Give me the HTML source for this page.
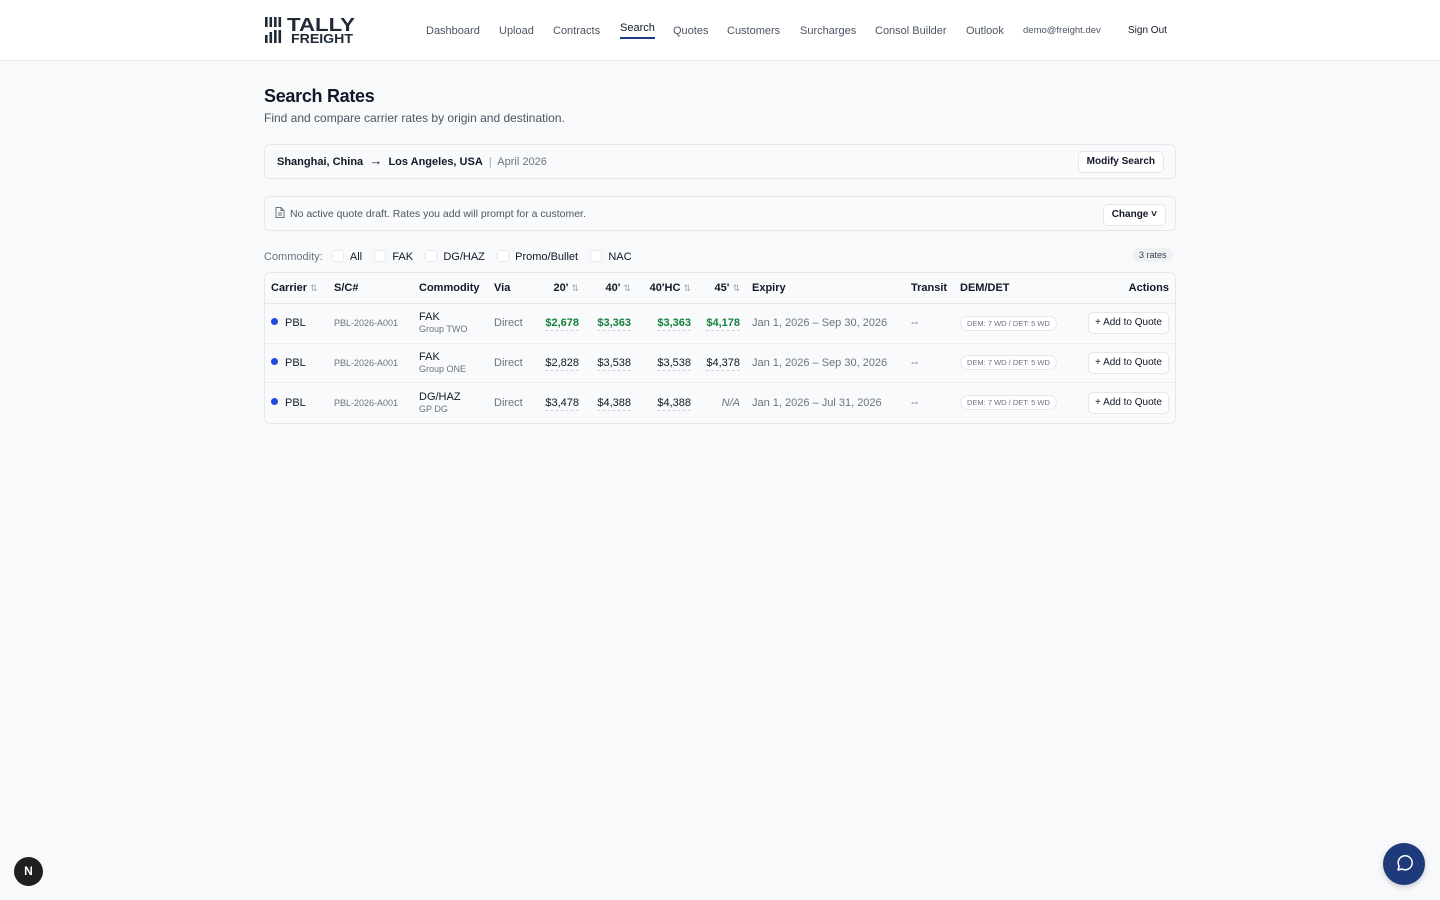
<!DOCTYPE html>
<html><head><meta charset="utf-8"><style>
*{box-sizing:border-box;margin:0;padding:0}
body{width:1440px;height:900px;background:#f8f9fb;font-family:"Liberation Sans",Arial,sans-serif;color:#111827;position:relative;overflow:hidden}
.hdr{height:61px;background:#fff;border-bottom:1px solid #e5e7eb;position:relative}
.logo{position:absolute;left:265px;top:15px}
.nav{position:absolute;top:25px;font-size:11px;color:#4b5563}
.nav span{position:absolute;white-space:nowrap}
.wrap{position:absolute;left:264px;width:912px}
h1{font-size:18px;font-weight:bold;letter-spacing:-.3px}
.sub{font-size:12px;color:#4b5563;margin-top:4px}
.card{position:absolute;left:264px;width:912px;border:1px solid #e5e7eb;border-radius:6px;background:#f9fafb}
.btn{position:absolute;background:#fff;border:1px solid #e5e7eb;border-radius:5px;font-size:10px;font-weight:600;color:#111827;padding:0 8px;line-height:20px}
.cb{display:inline-block;width:12px;height:12px;border:1px solid #e5e7eb;border-radius:3px;background:#fff;vertical-align:-2px;margin-right:6px}
table{position:absolute;left:264px;top:272px;width:912px;border:1px solid #e5e7eb;border-radius:6px;border-collapse:separate;border-spacing:0;table-layout:fixed;font-size:11px;background:#f9fafb}
td,th{padding:0 6px;white-space:nowrap}
th{height:31px;font-weight:600;text-align:left;color:#111827;border-bottom:1px solid #e5e7eb;font-size:11px}
td{height:39.5px;border-bottom:1px solid #eceef1}
tr:last-child td{border-bottom:none}
.r{text-align:right}
.s{color:#9ca3af;font-weight:normal;font-size:9px}
.dot{display:inline-block;width:7px;height:7px;border-radius:50%;background:#1d4ed8;margin-right:7px;vertical-align:1px}
.g{color:#6b7280}
.p span{border-bottom:1px dashed #d1d5db;padding-bottom:1px}
.gr{color:#15803d;font-weight:bold}
.pill{display:inline-block;border:1px solid #e5e7eb;border-radius:9px;font-size:7.5px;color:#6b7280;padding:2px 6px;background:#fff}
.aq{display:inline-block;border:1px solid #e5e7eb;border-radius:5px;background:#fff;font-size:10px;padding:0 6px;line-height:20px}
</style></head><body>
<div class="hdr">
<svg class="logo" width="92" height="30" viewBox="0 0 92 30"><g fill="#1f2937"><rect x="0" y="2" width="2.6" height="10"/><rect x="4.5" y="2" width="2.6" height="10"/><rect x="9" y="2" width="2.6" height="10"/><rect x="13.5" y="2" width="2.6" height="10"/><rect x="0" y="20" width="2.6" height="8"/><rect x="4.5" y="17" width="2.6" height="11"/><rect x="9" y="15" width="2.6" height="13"/><rect x="13.5" y="15" width="2.6" height="13"/></g>
<text x="22" y="16" font-family="Liberation Sans" font-weight="bold" font-size="18" fill="#1f2937" textLength="68" lengthAdjust="spacingAndGlyphs">TALLY</text>
<text x="26" y="28" font-family="Liberation Sans" font-weight="bold" font-size="13" fill="#1f2937" textLength="62" lengthAdjust="spacingAndGlyphs">FREIGHT</text></svg>
<div class="nav"><span style="left:426px">Dashboard</span><span style="left:499px">Upload</span><span style="left:553px">Contracts</span><span style="left:620px;top:-3px;color:#111827;border-bottom:2px solid #1e3a8a;padding-bottom:3px">Search</span><span style="left:673px">Quotes</span><span style="left:727px">Customers</span><span style="left:800px">Surcharges</span><span style="left:875px">Consol Builder</span><span style="left:966px">Outlook</span><span style="left:1023px;font-size:9.5px;top:0px">demo@freight.dev</span><span style="left:1128px;font-size:10px;color:#111827;top:0px">Sign Out</span></div>
</div>
<div class="wrap" style="top:86px"><h1>Search Rates</h1><div class="sub">Find and compare carrier rates by origin and destination.</div></div>
<div class="card" style="top:144px;height:35px"><div style="position:absolute;left:12px;top:10px;font-size:11px"><b style="font-weight:600">Shanghai, China</b> &nbsp;<span style="font-size:13px;font-weight:bold;line-height:11px">→</span>&nbsp; <b style="font-weight:600">Los Angeles, USA</b> <span style="color:#9ca3af">&nbsp;|&nbsp;</span> <span class="g">April 2026</span></div><div class="btn" style="right:11px;top:6px">Modify Search</div></div>
<div class="card" style="top:196px;height:35px"><div style="position:absolute;left:10px;top:10px;font-size:10.5px;color:#4b5563"><svg width="10" height="11" viewBox="0 0 10 11" style="vertical-align:-1px;margin-right:5px"><path d="M1 .5h5l3 3v7H1z M6 .5v3h3 M3 6h4M3 8h4" fill="none" stroke="#6b7280" stroke-width="1"/></svg>No active quote draft. Rates you add will prompt for a customer.</div><div class="btn" style="right:9px;top:7px">Change ˅</div></div>
<div style="position:absolute;left:264px;top:250px;font-size:11px;color:#111827"><span class="g">Commodity:</span> &nbsp;&nbsp;<span class="cb"></span>All &nbsp;&nbsp;&nbsp;<span class="cb"></span>FAK &nbsp;&nbsp;&nbsp;<span class="cb"></span>DG/HAZ &nbsp;&nbsp;&nbsp;<span class="cb"></span>Promo/Bullet &nbsp;&nbsp;&nbsp;<span class="cb"></span>NAC</div>
<div style="position:absolute;left:1133px;top:248px;font-size:9px;background:#eef0f3;border-radius:8px;padding:2px 6px;color:#374151">3 rates</div>
<table>
<colgroup><col style="width:63px"><col style="width:85px"><col style="width:75px"><col style="width:43px"><col style="width:54px"><col style="width:52px"><col style="width:60px"><col style="width:49px"><col style="width:159px"><col style="width:49px"><col style="width:115px"><col></colgroup>
<tr><th>Carrier <span class="s">⇅</span></th><th>S/C#</th><th>Commodity</th><th>Via</th><th class="r">20' <span class="s">⇅</span></th><th class="r">40' <span class="s">⇅</span></th><th class="r">40'HC <span class="s">⇅</span></th><th class="r">45' <span class="s">⇅</span></th><th>Expiry</th><th>Transit</th><th>DEM/DET</th><th class="r">Actions</th></tr>
<tr><td><span class="dot"></span>PBL</td><td class="g" style="font-size:9px">PBL-2026-A001</td><td style="line-height:12px">FAK<br><span class="g" style="font-size:9px">Group TWO</span></td><td class="g">Direct</td><td class="r p gr"><span>$2,678</span></td><td class="r p gr"><span>$3,363</span></td><td class="r p gr"><span>$3,363</span></td><td class="r p gr"><span>$4,178</span></td><td class="g">Jan 1, 2026 – Sep 30, 2026</td><td class="g">--</td><td><span class="pill">DEM: 7 WD / DET: 5 WD</span></td><td class="r"><span class="aq">+ Add to Quote</span></td></tr>
<tr><td><span class="dot"></span>PBL</td><td class="g" style="font-size:9px">PBL-2026-A001</td><td style="line-height:12px">FAK<br><span class="g" style="font-size:9px">Group ONE</span></td><td class="g">Direct</td><td class="r p"><span>$2,828</span></td><td class="r p"><span>$3,538</span></td><td class="r p"><span>$3,538</span></td><td class="r p"><span>$4,378</span></td><td class="g">Jan 1, 2026 – Sep 30, 2026</td><td class="g">--</td><td><span class="pill">DEM: 7 WD / DET: 5 WD</span></td><td class="r"><span class="aq">+ Add to Quote</span></td></tr>
<tr><td><span class="dot"></span>PBL</td><td class="g" style="font-size:9px">PBL-2026-A001</td><td style="line-height:12px">DG/HAZ<br><span class="g" style="font-size:9px">GP DG</span></td><td class="g">Direct</td><td class="r p"><span>$3,478</span></td><td class="r p"><span>$4,388</span></td><td class="r p"><span>$4,388</span></td><td class="r g"><i>N/A</i></td><td class="g">Jan 1, 2026 – Jul 31, 2026</td><td class="g">--</td><td><span class="pill">DEM: 7 WD / DET: 5 WD</span></td><td class="r"><span class="aq">+ Add to Quote</span></td></tr>
</table>
<div style="position:absolute;left:14px;top:857px;width:29px;height:29px;border-radius:50%;background:#1f1f1f;color:#fff;font-size:12px;font-weight:bold;text-align:center;line-height:29px">N</div>
<div style="position:absolute;left:1383px;top:843px;width:42px;height:42px;border-radius:50%;background:#1e3a7b;box-shadow:0 2px 6px rgba(0,0,0,.2)"><svg width="42" height="42" viewBox="0 0 42 42"><path d="M15 27l1.2-3.6A7 7 0 1 1 19 26z" fill="none" stroke="#fff" stroke-width="1.5" stroke-linejoin="round"/></svg></div>
</body></html>
